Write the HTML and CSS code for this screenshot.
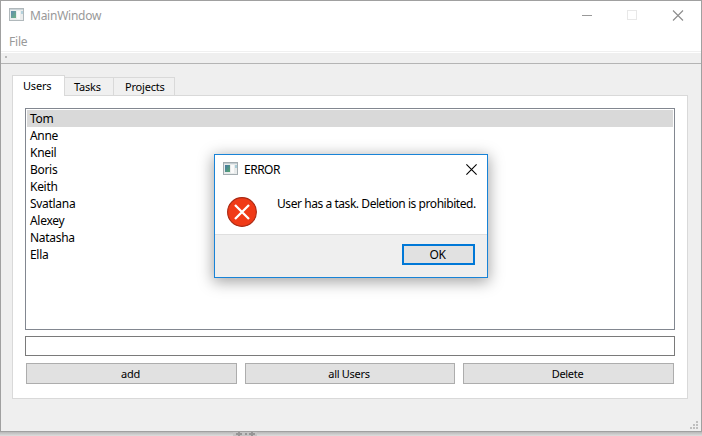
FILE: index.html
```
<!DOCTYPE html>
<html lang="en">
<head>
<meta charset="utf-8">
<title>MainWindow</title>
<link rel="stylesheet" href="styles.css">
</head>
<body>
<svg class="defs" width="0" height="0">
  <defs>
    <linearGradient id="screen" x1="0" y1="0" x2="1" y2="1"><stop offset="0" stop-color="#4777a5"/><stop offset="1" stop-color="#55a66d"/></linearGradient>
    <symbol id="app" viewBox="0 0 15 13">
      <path fill="#a3acb0" d="M0 0h15v13H0z"/>
      <path fill="#e8ebeb" d="M1 1h13v11H1z"/>
      <path fill="#c3cdd2" d="M1 1h13v1H1z"/>
      <path fill="url(#screen)" d="M2 3h5v7H2z"/>
      <path fill="#fafafa" d="M8 3h3v8H8z"/>
      <path fill="#a9cbd6" d="M12 3h2v3h-2z"/>
    </symbol>
  </defs>
</svg>
<div class="window">
  <header class="titlebar">
    <svg class="app-icon faded" width="15" height="13"><use href="#app"/></svg>
    <span class="title">MainWindow</span>
    <svg class="controls" width="101" height="12" viewBox="0 0 101 12" shape-rendering="crispEdges">
      <path d="M0 5.5h10" stroke="#999"/>
      <path d="M45.5.5h9v9h-9z" fill="none" stroke="#e8e8e8"/>
      <path d="M91 .5l10 10M101 .5l-10 10" stroke="#8c8c8c" stroke-width="1.1" shape-rendering="auto"/>
    </svg>
  </header>
  <nav class="menubar"><span>File</span></nav>
  <div class="toolbar"><i></i></div>
  <main class="content">
    <div class="tabs">
      <div class="tab active"><span>Users</span></div>
      <div class="tab"><span>Tasks</span></div>
      <div class="tab last"><span>Projects</span></div>
    </div>
    <section class="panel">
      <ul class="list">
        <li class="selected">Tom</li><li>Anne</li><li>Kneil</li><li>Boris</li><li>Keith</li><li>Svatlana</li><li>Alexey</li><li>Natasha</li><li>Ella</li>
      </ul>
      <input class="field" type="text" aria-label="User name">
      <div class="actions">
        <button>add</button><button>all Users</button><button>Delete</button>
      </div>
    </section>
  </main>
  <svg class="grip" width="8" height="8" viewBox="0 0 8 8" shape-rendering="crispEdges"><path fill="#bfbfbf" d="M6 0h2v2H6zM3 3h2v2H3zM6 3h2v2H6zM0 6h2v2H0zM3 6h2v2H3zM6 6h2v2H6z"/></svg>
</div>
<div class="below"><svg width="24" height="4" viewBox="0 0 24 4" shape-rendering="crispEdges"><path fill="#c4c4c4" d="M0 0h24v4H0z"/><path fill="#969696" d="M5 0h2v1h2v2H7v1H5V3H3V1h2zM12 1h2v2h-2zM18 0h2v1h2v2h-2v1h-2V3h-2V1h2z"/></svg></div>
<div class="dialog" role="alertdialog">
  <header class="dialog-title">
    <svg class="app-icon" width="15" height="13"><use href="#app"/></svg>
    <span class="error-title">ERROR</span>
    <svg class="close" width="11" height="11" viewBox="0 0 11 11"><path d="M.4.4l10.2 10.2M10.6.4L.4 10.6" stroke="#000" stroke-width="1.1"/></svg>
  </header>
  <div class="dialog-body">
    <svg width="30" height="30" viewBox="0 0 30 30"><circle cx="15" cy="15" r="14.4" fill="#f03a17" stroke="#a82a14" stroke-width="1.1"/><path d="M8 8l14 14M22 8L8 22" stroke="#fff" stroke-width="2.3"/></svg>
    <p>User has a task. Deletion is prohibited.</p>
  </div>
  <footer class="dialog-footer"><button class="ok">OK</button></footer>
</div>
</body>
</html>
```
FILE: styles.css
```
* { box-sizing: border-box; }
body {
  margin: 0;
  width: 702px;
  height: 436px;
  overflow: hidden;
  position: relative;
  background: #d4d4d4;
  color: #000;
  font: 12px/17px "Noto Sans", "Open Sans", sans-serif;
  letter-spacing: -0.35px;
}
.defs { position: absolute; }
.window {
  position: relative;
  width: 702px;
  height: 432px;
  border: 1px solid #a0a0a0;
  background: #efefef;
}
.titlebar {
  height: 30px;
  display: flex;
  align-items: flex-start;
  padding: 6px 18px 0 8px;
  background: #fff;
  color: #999;
}
.app-icon { display: block; margin-top: 1px; }
.faded { opacity: .85; }
.title { margin-left: 6px; letter-spacing: -0.25px; }
.controls { margin: 3px 0 0 auto; overflow: visible; }
.menubar {
  height: 22px;
  padding: 2px 8px;
  background: #fff;
  border-bottom: 1px solid #fff;
  box-shadow: inset 0 -1px #f0f0f0;
  color: #999;
}
.menubar span { letter-spacing: -0.2px; }
.toolbar {
  height: 11px;
  padding: 3px 4px;
  border-bottom: 1px solid #b4b4b4;
}
.toolbar i {
  display: block;
  width: 2px;
  height: 2px;
  background: #b8b8b8;
}
.content { padding: 11px 13px 0 11px; }
.tabs {
  display: flex;
  align-items: flex-end;
  height: 21px;
  margin-bottom: -1px;
}
.tab {
  height: 19px;
  width: 49px;
  border: 1px solid #d9d9d9;
  border-left: 0;
  background: #f0f0f0;
  padding-left: 9px;
  font-size: 11px;
  letter-spacing: -0.2px;
}
.tab.active {
  position: relative;
  width: 53px;
  height: 21px;
  padding-left: 10px;
  border-left: 1px solid #d9d9d9;
  border-bottom: 0;
  background: #fff;
}
.tab.last { width: 61px; padding-left: 11px; }
.tab.active span { position: relative; top: 1px; }
.panel {
  height: 304px;
  border: 1px solid #d9d9d9;
  background: #fff;
  padding: 12px;
}
.list {
  margin: 0;
  padding: 1px;
  height: 222px;
  border: 1px solid #828790;
  list-style: none;
  letter-spacing: -0.3px;
}
.list li { padding-left: 3px; height: 17px; }
.list .selected { background: #d9d9d9; }
.field {
  display: block;
  width: 100%;
  height: 20px;
  margin: 6px 0 7px;
  border: 1px solid #7a7a7a;
  background: #fff;
}
.actions {
  display: grid;
  grid-template-columns: 211px 210px 211px;
  gap: 8px;
  padding-left: 1px;
}
button {
  height: 21px;
  border: 1px solid #adadad;
  border-radius: 0;
  padding: 0 2px 0 0;
  background: #e1e1e1;
  color: #000;
  font: inherit;
  font-size: 11px;
  letter-spacing: -0.3px;
}
.grip { position: absolute; right: 3px; bottom: 2px; }
.below {
  height: 4px;
  padding-left: 233px;
  background: linear-gradient(#b8b8b8, #dedede);
}
.below svg { display: block; }
.dialog {
  position: absolute;
  left: 214px;
  top: 154px;
  width: 274px;
  height: 124px;
  border: 1px solid #1883d7;
  background: #fff;
  box-shadow: 0 3px 14px 1px rgba(0, 0, 0, .36);
}
.dialog-title {
  height: 32px;
  display: flex;
  padding: 6px 10px 0 8px;
}
.error-title { margin-left: 6px; letter-spacing: -0.5px; }
.close { margin: 3px 0 0 auto; overflow: visible; }
.dialog-body {
  height: 47px;
  display: flex;
  padding: 10px 0 0 12px;
}
.dialog-body p { margin: -2px 0 0 20px; white-space: nowrap; letter-spacing: -0.44px; }
.dialog-footer {
  height: 43px;
  display: flex;
  justify-content: flex-end;
  padding: 9px 12px;
  border-top: 1px solid #dfdfdf;
  background: #efefef;
}
.ok { width: 73px; border: 2px solid #0078d7; font-size: 12px; letter-spacing: -0.5px; }
```
